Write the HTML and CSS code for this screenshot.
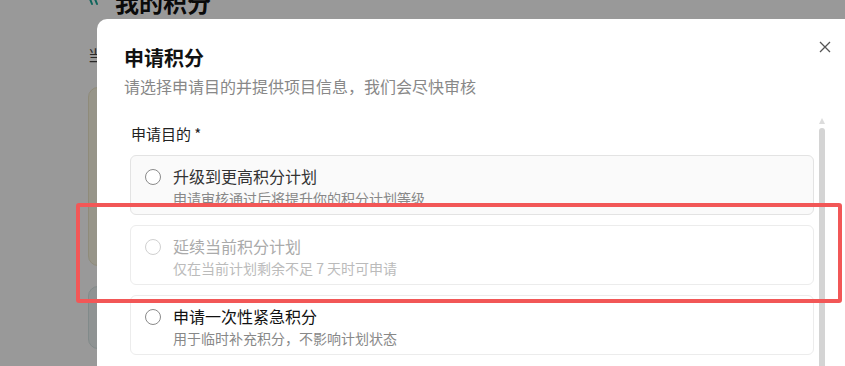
FILE: index.html
```html
<!DOCTYPE html>
<html lang="zh-CN">
<head>
<meta charset="utf-8">
<title>申请积分</title>
<link rel="stylesheet" href="styles.css">
</head>
<body>
<div class="page">
  <div class="page-head">
    <svg class="page-logo" width="12" height="8" viewBox="0 0 12 8"><path d="M2 0 L4 5 M7 0 L9 5" stroke="#1aa89a" stroke-width="2" fill="none" stroke-linecap="round"/></svg>
    <h1 class="page-title">我的积分</h1>
  </div>
  <div class="page-sub">当前计划</div>
  <div class="bg-card bg-card-warm"></div>
  <div class="bg-card bg-card-cool"></div>
</div>
<div class="overlay"></div>
<div class="dialog">
  <button class="close" aria-label="关闭">
    <svg width="12" height="12" viewBox="0 0 12 12"><path d="M1 1 L11 11 M11 1 L1 11" stroke="#555" stroke-width="1.3" fill="none"/></svg>
  </button>
  <div class="dialog-header">
    <h2 class="dialog-title">申请积分</h2>
    <p class="dialog-desc">请选择申请目的并提供项目信息，我们会尽快审核</p>
  </div>
  <div class="dialog-body">
    <div class="scroll-content">
      <div class="field-label">申请目的 *</div>
      <div class="options">
        <label class="option option-hover">
          <span class="radio"></span>
          <span class="option-text">
            <span class="option-title">升级到更高积分计划</span>
            <span class="option-sub">申请审核通过后将提升你的积分计划等级</span>
          </span>
        </label>
        <label class="option option-disabled">
          <span class="radio"></span>
          <span class="option-text">
            <span class="option-title">延续当前积分计划</span>
            <span class="option-sub">仅在当前计划剩余不足 7 天时可申请</span>
          </span>
        </label>
        <label class="option">
          <span class="radio"></span>
          <span class="option-text">
            <span class="option-title option-title-dark">申请一次性紧急积分</span>
            <span class="option-sub">用于临时补充积分，不影响计划状态</span>
          </span>
        </label>
      </div>
    </div>
    <div class="scrollbar">
      <div class="scroll-arrow"></div>
      <div class="scroll-thumb"></div>
    </div>
  </div>
</div>
<div class="annotation"></div>
</body>
</html>
```

FILE: styles.css
```css
* { box-sizing: border-box; }
html, body {
  margin: 0;
  padding: 0;
  width: 845px;
  height: 366px;
  overflow: hidden;
  background: #fff;
  font-family: "Noto Sans CJK SC", "Noto Sans", sans-serif;
}
.page {
  padding: 0 0 0 88px;
  position: relative;
  height: 366px;
}
.page-head {
  display: flex;
  align-items: flex-start;
  gap: 15px;
  margin-top: -13px;
  height: 30px;
}
.page-logo { margin-top: 12px; }
.page-title {
  margin: 0;
  font-size: 24px;
  line-height: 30px;
  font-weight: 700;
  color: #111;
}
.page-sub {
  margin-top: 28px;
  font-size: 15px;
  line-height: 20px;
  color: #444;
}
.bg-card {
  width: 300px;
  border-radius: 10px;
}
.bg-card-warm {
  margin-top: 22px;
  height: 179px;
  background: #fcf8e4;
  border: 1px solid #eee8cc;
}
.bg-card-cool {
  margin-top: 20px;
  height: 63px;
  background: #eef6f6;
  border: 1px solid #d8e6e6;
}
.overlay {
  position: fixed;
  inset: 0;
  background: rgba(0, 0, 0, 0.4);
}
.dialog {
  position: absolute;
  left: 97px;
  top: 19px;
  width: 800px;
  height: 420px;
  background: #fff;
  border-radius: 10px;
}
.close {
  position: absolute;
  left: 722px;
  top: 22px;
  width: 12px;
  height: 12px;
  padding: 0;
  border: 0;
  background: none;
  display: flex;
}
.dialog-header {
  padding: 25px 27px 0;
}
.dialog-title {
  margin: 0;
  font-size: 20px;
  line-height: 28px;
  font-weight: 700;
  color: #111;
}
.dialog-desc {
  margin: 3px 0 0;
  font-size: 16px;
  line-height: 22px;
  color: #888;
}
.dialog-body {
  display: flex;
  margin-top: 19px;
}
.scroll-content {
  width: 684px;
  margin-left: 33px;
  padding-top: 7px;
}
.field-label {
  padding-left: 1px;
  font-size: 15px;
  line-height: 22px;
  color: #222;
  margin-bottom: 10px;
}
.options {
  display: flex;
  flex-direction: column;
  gap: 10px;
}
.option {
  display: flex;
  align-items: flex-start;
  gap: 12px;
  height: 60px;
  padding: 8px 14px 6px;
  border: 1px solid #ececec;
  border-radius: 6px;
  background: #fff;
}
.option-hover {
  background: #fafafa;
  border-color: #e3e3e3;
}
.radio {
  flex: none;
  width: 16px;
  height: 16px;
  margin-top: 5px;
  border: 1.5px solid #8a8a8a;
  border-radius: 50%;
  background: #fff;
}
.option-text {
  display: flex;
  flex-direction: column;
}
.option-title {
  font-size: 16px;
  line-height: 24px;
  color: #333;
}
.option-title-dark { color: #111; }
.option-sub {
  font-size: 14px;
  line-height: 20px;
  color: #888;
}
.option-disabled .radio { border-color: #d0d0d0; }
.option-disabled .option-title { color: #aaa; }
.option-disabled .option-sub { color: #bbb; }
.scrollbar {
  margin-left: 5px;
  width: 6px;
  display: flex;
  flex-direction: column;
  align-items: center;
  padding-top: 2px;
}
.scroll-arrow {
  width: 0;
  height: 0;
  border-left: 3px solid transparent;
  border-right: 3px solid transparent;
  border-bottom: 6px solid #dcdcdc;
}
.scroll-thumb {
  margin-top: 4px;
  width: 6px;
  height: 300px;
  background: #d4d4d4;
  border-radius: 3px 3px 0 0;
}
.annotation {
  position: absolute;
  left: 76px;
  top: 203px;
  width: 766px;
  height: 100px;
  border: 4px solid #f25757;
  border-radius: 3px;
}
```
